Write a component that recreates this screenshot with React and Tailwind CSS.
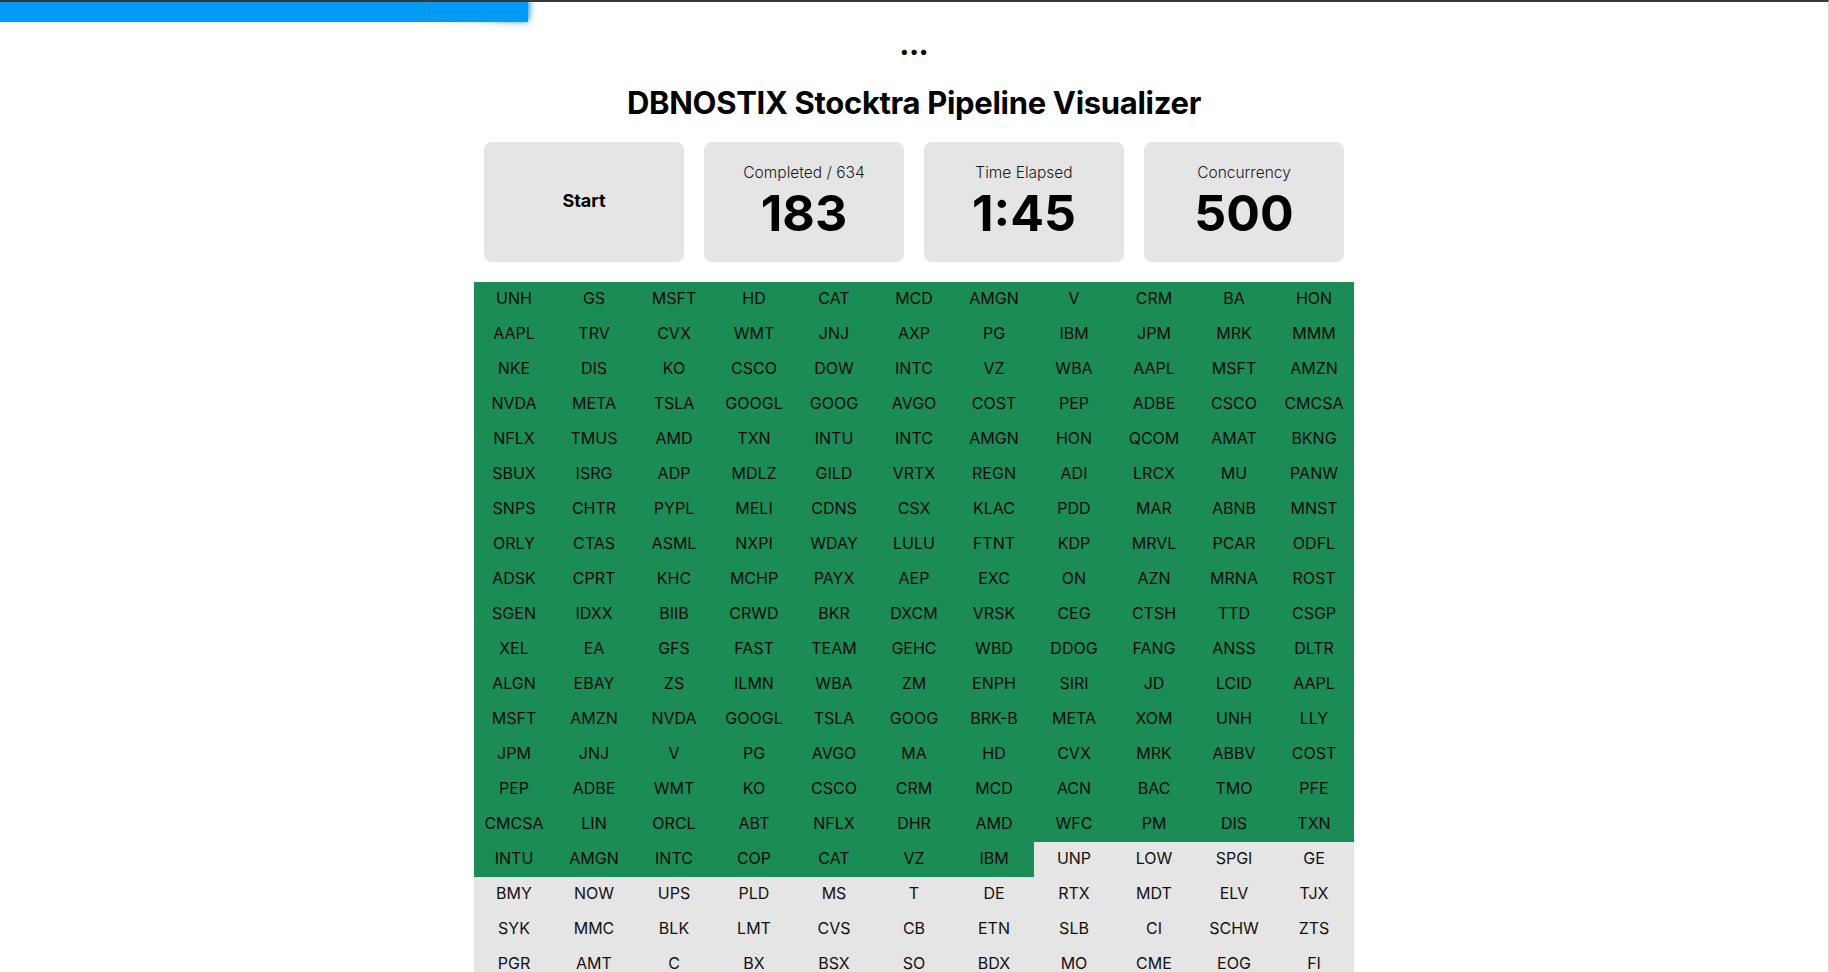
import React from "react";

const ROWS = [
  "UNH GS MSFT HD CAT MCD AMGN V CRM BA HON",
  "AAPL TRV CVX WMT JNJ AXP PG IBM JPM MRK MMM",
  "NKE DIS KO CSCO DOW INTC VZ WBA AAPL MSFT AMZN",
  "NVDA META TSLA GOOGL GOOG AVGO COST PEP ADBE CSCO CMCSA",
  "NFLX TMUS AMD TXN INTU INTC AMGN HON QCOM AMAT BKNG",
  "SBUX ISRG ADP MDLZ GILD VRTX REGN ADI LRCX MU PANW",
  "SNPS CHTR PYPL MELI CDNS CSX KLAC PDD MAR ABNB MNST",
  "ORLY CTAS ASML NXPI WDAY LULU FTNT KDP MRVL PCAR ODFL",
  "ADSK CPRT KHC MCHP PAYX AEP EXC ON AZN MRNA ROST",
  "SGEN IDXX BIIB CRWD BKR DXCM VRSK CEG CTSH TTD CSGP",
  "XEL EA GFS FAST TEAM GEHC WBD DDOG FANG ANSS DLTR",
  "ALGN EBAY ZS ILMN WBA ZM ENPH SIRI JD LCID AAPL",
  "MSFT AMZN NVDA GOOGL TSLA GOOG BRK-B META XOM UNH LLY",
  "JPM JNJ V PG AVGO MA HD CVX MRK ABBV COST",
  "PEP ADBE WMT KO CSCO CRM MCD ACN BAC TMO PFE",
  "CMCSA LIN ORCL ABT NFLX DHR AMD WFC PM DIS TXN",
  "INTU AMGN INTC COP CAT VZ IBM UNP LOW SPGI GE",
  "BMY NOW UPS PLD MS T DE RTX MDT ELV TJX",
  "SYK MMC BLK LMT CVS CB ETN SLB CI SCHW ZTS",
  "PGR AMT C BX BSX SO BDX MO CME EOG FI",
];

const TICKERS = ROWS.join(" ").split(" ");
const COMPLETED = 183;

function Stat({ label, value }) {
  return (
    <div className="w-[200px] h-[120px] rounded-lg bg-[#e5e5e5] flex flex-col items-center justify-center">
      <div className="text-[15.5px] leading-5 font-light text-[#1a1a1a]">{label}</div>
      <div className="mt-[2px] text-[50px] leading-[56px] font-bold text-black">{value}</div>
    </div>
  );
}

export default function App() {
  return (
    <div
      className="relative h-screen overflow-hidden bg-white border-t-2 border-[#38383a] border-r border-r-[#d6d6d6]"
      style={{ fontFamily: "Inter, 'Noto Sans', sans-serif" }}
    >
      <div className="absolute top-0 left-0 h-5 w-[528px] bg-[#009af7] z-10">
        <div className="absolute right-0 top-0 h-full w-[100px] opacity-100 shadow-[0_0_10px_#29d,0_0_5px_#29d] rotate-3 -translate-y-1" />
      </div>

      <div className="flex flex-col items-center pt-[28px]">
        <div className="text-[26px] leading-8 font-black text-black">...</div>
        <h1 className="mt-[21px] text-[31px] leading-10 font-bold text-black tracking-[-0.01em]">
          DBNOSTIX Stocktra Pipeline Visualizer
        </h1>
        <div className="mt-[19px] flex gap-5">
          <button className="w-[200px] h-[120px] pb-[2px] rounded-lg bg-[#e5e5e5] text-lg font-bold text-black">
            Start
          </button>
          <Stat label="Completed / 634" value="183" />
          <Stat label="Time Elapsed" value="1:45" />
          <Stat label="Concurrency" value="500" />
        </div>
        <div className="mt-5 grid grid-cols-11 w-[880px]">
          {TICKERS.map((t, i) => (
            <div
              key={i}
              className={
                i < COMPLETED
                  ? "h-[35px] pb-[3px] flex items-center justify-center bg-[#1b8c56] text-base text-[#0a0a0a]"
                  : "h-[35px] pb-[3px] flex items-center justify-center bg-[#e5e5e5] text-base text-[#111111]"
              }
            >
              {t}
            </div>
          ))}
        </div>
      </div>
    </div>
  );
}
